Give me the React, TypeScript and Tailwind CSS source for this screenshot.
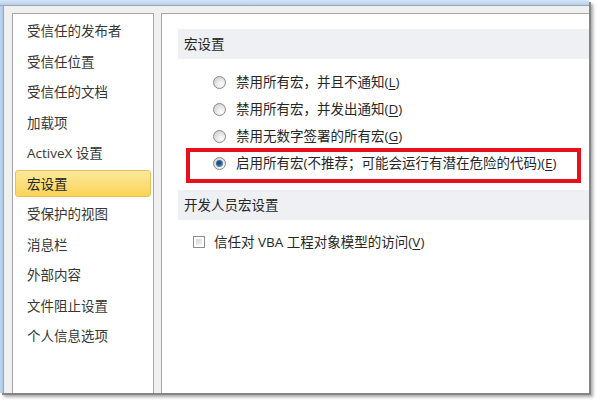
import { ReactNode } from 'react';

const FONT = '"Open Sans","Noto Sans CJK SC",sans-serif';

const MENU = [
  '受信任的发布者',
  '受信任位置',
  '受信任的文档',
  '加载项',
  'ActiveX 设置',
  '宏设置',
  '受保护的视图',
  '消息栏',
  '外部内容',
  '文件阻止设置',
  '个人信息选项',
];

const RADIOS: { text: string; key: string; checked?: boolean }[] = [
  { text: '禁用所有宏，并且不通知', key: 'L' },
  { text: '禁用所有宏，并发出通知', key: 'D' },
  { text: '禁用无数字签署的所有宏', key: 'G' },
  { text: '启用所有宏(不推荐；可能会运行有潜在危险的代码)', key: 'E', checked: true },
];

function Radio({ checked }: { checked?: boolean }) {
  return (
    <div className="w-[13px] h-[13px] rounded-full border border-[#8a8a8a] bg-[radial-gradient(circle_at_65%_70%,#ffffff_0%,#e6e6e6_45%,#c8c8c8_100%)] flex items-center justify-center">
      {checked && (
        <div className="w-[7px] h-[7px] rounded-full bg-[radial-gradient(circle_at_40%_40%,#1d3f62_0%,#2d6aa6_45%,#7ab8ea_100%)]" />
      )}
    </div>
  );
}

function Accel({ text, k }: { text: string; k: string }) {
  return (
    <span>
      {text}(<span className="underline underline-offset-2">{k}</span>)
    </span>
  );
}

function Header({ children }: { children: ReactNode }) {
  return (
    <div className="ml-[16px] h-[30px] bg-[#eef0f4] flex items-center pl-[6px] text-[13.5px] text-[#262626]">
      {children}
    </div>
  );
}

export default function App() {
  return (
    <div className="w-[600px] h-[403px] bg-white relative overflow-hidden" style={{ fontFamily: FONT }}>
      <div className="w-[589px] h-[393px] flex flex-col bg-[#f0f0f0] shadow-[2px_2px_0_#858585,4px_4px_3px_rgba(0,0,0,0.35)]">
        {/* title strip */}
        <div className="h-[6px] bg-gradient-to-b from-[#d6e5f5] to-[#b6cfeb] border-b border-[#98a6b6]" />
        <div className="flex-1 flex min-h-0">
          <div className="w-[3px] bg-gradient-to-r from-[#c3d8ef] to-[#a9c4e4]" />
          <div className="w-px bg-[#9aa6b4]" />
          <div className="flex-1 flex gap-[7px] pl-[8px] pt-[7px] min-h-0">
            {/* left nav */}
            <div className="w-[142px] bg-white border border-[#a7a7a7] border-b-0 pt-[2px] px-[2px]">
              {MENU.map(m => (
                <div
                  key={m}
                  className={
                    m === '宏设置'
                      ? 'h-[27px] my-[1.75px] flex items-center pl-[11px] rounded-[3px] border border-[#e2c25e] bg-gradient-to-b from-[#fde99a] to-[#fbd356] text-[13.5px] text-[#262626]'
                      : 'h-[30.5px] flex items-center pl-[12px] text-[13.5px] text-[#363636]'
                  }
                >
                  {m}
                </div>
              ))}
            </div>
            {/* right content */}
            <div className="flex-1 bg-white border border-[#a7a7a7] border-r-0 border-b-0">
              <div className="mt-[15px]">
                <Header>宏设置</Header>
              </div>
              <div className="mt-[10px]">
                {RADIOS.map(r => (
                  <div key={r.key} className="h-[27px] flex items-center pl-[51px] gap-[10px] text-[13.5px] text-[#262626]">
                    <Radio checked={r.checked} />
                    <Accel text={r.text} k={r.key} />
                  </div>
                ))}
              </div>
              <div className="mt-[13px]">
                <Header>开发人员宏设置</Header>
              </div>
              <div className="mt-[8px] h-[28px] flex items-center pl-[31px] gap-[9px] text-[13.5px] text-[#262626]">
                <div className="w-[12px] h-[12px] border border-[#8f8f8f] bg-white p-[2px]">
                  <div className="w-full h-full bg-gradient-to-br from-[#d4d4d4] to-[#f6f6f6]" />
                </div>
                <Accel text="信任对 VBA 工程对象模型的访问" k="V" />
              </div>
            </div>
          </div>
        </div>
      </div>
      {/* red annotation box */}
      <div className="absolute left-[186px] top-[148px] w-[395px] h-[35px] border-[4px] border-[#e8101c]" />
    </div>
  );
}
